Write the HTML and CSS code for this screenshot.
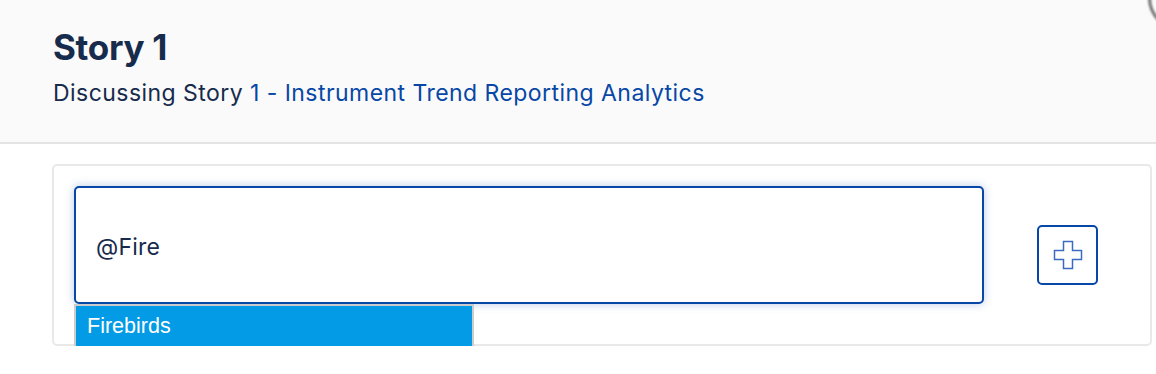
FILE: index.html
```html
<!DOCTYPE html>
<html lang="en">
<head>
  <meta charset="UTF-8">
  <title>Story 1</title>
  <link rel="stylesheet" href="styles.css">
</head>
<body>
  <div class="modal-header">
    <span class="close-ring"></span>
    <h1 class="title">Story 1</h1>
    <p class="subtitle">Discussing Story <a class="story-link" href="#">1 - Instrument Trend Reporting Analytics</a></p>
  </div>

  <div class="comment-card">
    <div class="mention-box">
      <input class="mention-input" type="text" value="@Fire">
      <ul class="mention-list">
        <li class="mention-item active">Firebirds</li>
      </ul>
    </div>
    <button class="add-btn" type="button" title="Add">
      <svg width="30" height="30" viewBox="0 0 30 30">
        <path d="M10.5 1.5 H19.5 V10.5 H28.5 V19.5 H19.5 V28.5 H10.5 V19.5 H1.5 V10.5 H10.5 Z" fill="none" stroke="#3a6bc0" stroke-width="1.5"/>
      </svg>
    </button>
  </div>
</body>
</html>
```

FILE: styles.css
```css
body {
  margin: 0;
  background: #fff;
  font-family: Inter, "Noto Sans", sans-serif;
  color: #172b4d;
}
.modal-header {
  position: relative;
  overflow: hidden;
  height: 144px;
  box-sizing: border-box;
  padding: 25px 0 0 53px;
  background: #fafafa;
  border-bottom: 2px solid #e4e4e4;
}
.close-ring {
  position: absolute;
  left: 1148px;
  top: -34px;
  width: 64px;
  height: 64px;
  box-sizing: border-box;
  border: 3px solid #6e6e6e;
  border-radius: 50%;
  filter: blur(0.8px);
}
.title {
  margin: 0;
  font-size: 35px;
  line-height: 44px;
  font-weight: 700;
  letter-spacing: -0.3px;
  color: #172b4d;
}
.subtitle {
  margin: 10px 0 0;
  font-size: 23px;
  line-height: 28px;
  letter-spacing: 0.45px;
  color: #172b4d;
}
.story-link {
  color: #0747a6;
  text-decoration: none;
}
.comment-card {
  display: flex;
  align-items: center;
  width: 1100px;
  box-sizing: border-box;
  margin: 20px 0 0 52px;
  padding: 20px 52px 40px 20px;
  border: 2px solid #e9e9e9;
  border-radius: 5px;
  background: #fff;
}
.mention-box {
  position: relative;
  flex: 0 0 910px;
}
.mention-input {
  display: block;
  width: 100%;
  height: 118px;
  box-sizing: border-box;
  padding: 4px 20px 0;
  border: 2px solid #0747a6;
  border-radius: 5px;
  box-shadow: 0 0 10px rgba(7, 71, 166, 0.28);
  font-family: Inter, "Noto Sans", sans-serif;
  font-size: 23px;
  letter-spacing: 0.2px;
  color: #172b4d;
  outline: none;
}
.mention-list {
  position: absolute;
  top: 118px;
  left: 0;
  width: 400px;
  margin: 0;
  padding: 0;
  list-style: none;
  border: 2px solid #cccccc;
  box-sizing: border-box;
}
.mention-item {
  height: 40px;
  line-height: 40px;
  padding-left: 11px;
  font-family: "Liberation Sans", Arial, sans-serif;
  font-size: 21.5px;
  color: #fff;
}
.mention-item.active {
  background: #039be5;
}
.add-btn {
  display: flex;
  align-items: center;
  justify-content: center;
  width: 61px;
  height: 60px;
  margin: 20px 0 0 auto;
  padding: 0;
  background: #fff;
  border: 2px solid #0747a6;
  border-radius: 5px;
  cursor: pointer;
}
```
